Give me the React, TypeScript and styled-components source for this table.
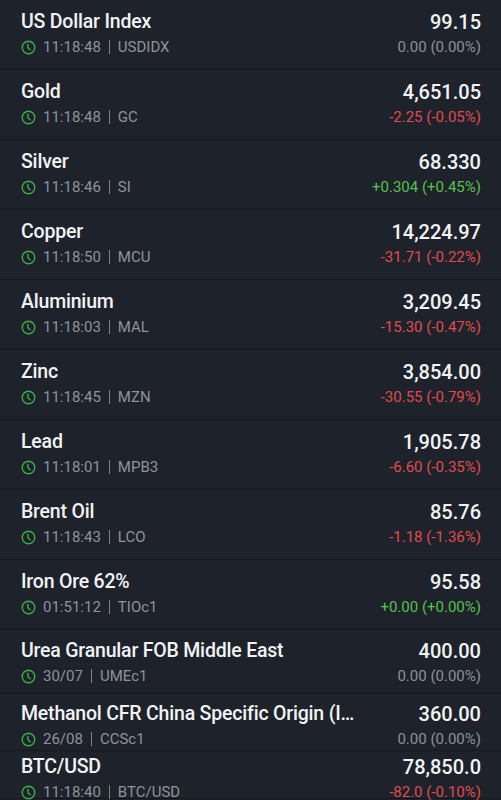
import React from "react";
import styled, { createGlobalStyle } from "styled-components";

type Quote = {
	name: string;
	time: string;
	code: string;
	price: string;
	change: string;
	dir: "up" | "down" | "flat";
	height?: number;
	top?: number;
};

const quotes: Quote[] = [
	{ name: "US Dollar Index", time: "11:18:48", code: "USDIDX", price: "99.15", change: "0.00 (0.00%)", dir: "flat" },
	{ name: "Gold", time: "11:18:48", code: "GC", price: "4,651.05", change: "-2.25 (-0.05%)", dir: "down" },
	{ name: "Silver", time: "11:18:46", code: "SI", price: "68.330", change: "+0.304 (+0.45%)", dir: "up" },
	{ name: "Copper", time: "11:18:50", code: "MCU", price: "14,224.97", change: "-31.71 (-0.22%)", dir: "down" },
	{ name: "Aluminium", time: "11:18:03", code: "MAL", price: "3,209.45", change: "-15.30 (-0.47%)", dir: "down" },
	{ name: "Zinc", time: "11:18:45", code: "MZN", price: "3,854.00", change: "-30.55 (-0.79%)", dir: "down" },
	{ name: "Lead", time: "11:18:01", code: "MPB3", price: "1,905.78", change: "-6.60 (-0.35%)", dir: "down" },
	{ name: "Brent Oil", time: "11:18:43", code: "LCO", price: "85.76", change: "-1.18 (-1.36%)", dir: "down" },
	{ name: "Iron Ore 62%", time: "01:51:12", code: "TIOc1", price: "95.58", change: "+0.00 (+0.00%)", dir: "up" },
	{ name: "Urea Granular FOB Middle East", time: "30/07", code: "UMEc1", price: "400.00", change: "0.00 (0.00%)", dir: "flat", height: 64, top: 9 },
	{ name: "Methanol CFR China Specific Origin (ICIS)", time: "26/08", code: "CCSc1", price: "360.00", change: "0.00 (0.00%)", dir: "flat", height: 57, top: 8 },
	{ name: "BTC/USD", time: "11:18:40", code: "BTC/USD", price: "78,850.0", change: "-82.0 (-0.10%)", dir: "down", height: 48, top: 4 },
];

const changeColors = {
	up: "#55c24d",
	down: "#e04b4f",
	flat: "#8d9198",
};

const Clock = () => (
	<svg width="15" height="15" viewBox="0 0 24 24" fill="none" stroke="#3fae4a" strokeWidth="2.2" strokeLinecap="round" strokeLinejoin="round">
		<circle cx="12" cy="12" r="10" />
		<path d="M11 6.5v5.5l3.5 3.5" />
	</svg>
);

const App = (): JSX.Element => {
	return (
		<>
			<GlobalStyle />
			<List>
				{quotes.map((q) => (
					<Row key={q.code} $height={q.height ?? 70} $top={q.top ?? 10}>
						<Left>
							<Name>{q.name}</Name>
							<Meta>
								<Clock />
								<span>{q.time}</span>
								<Bar />
								<span>{q.code}</span>
							</Meta>
						</Left>
						<Right>
							<Price>{q.price}</Price>
							<Change $color={changeColors[q.dir]}>{q.change}</Change>
						</Right>
					</Row>
				))}
			</List>
		</>
	);
};

const GlobalStyle = createGlobalStyle`
	html, body {
		margin: 0;
		padding: 0;
		background: #1e222a;
		font-family: Roboto, "Liberation Sans", sans-serif;
	}
`;

const List = styled.div`
	display: flex;
	flex-direction: column;
	width: 501px;
	height: 800px;
	overflow: hidden;
	background: #1e222a;
`;

const Row = styled.div<{ $height: number; $top: number }>`
	display: flex;
	align-items: flex-start;
	justify-content: space-between;
	gap: 12px;
	flex-shrink: 0;
	box-sizing: border-box;
	height: ${(p) => p.$height}px;
	padding: ${(p) => p.$top}px 20px 0 21px;
	border-bottom: 1px solid #14171c;
`;

const Left = styled.div`
	display: flex;
	flex-direction: column;
	flex: 1;
	min-width: 0;
`;

const Name = styled.div`
	font-size: 19.5px;
	font-weight: 500;
	letter-spacing: -0.2px;
	line-height: 24px;
	color: #f2f3f4;
	white-space: nowrap;
	overflow: hidden;
	text-overflow: ellipsis;
`;

const Meta = styled.div`
	display: flex;
	align-items: center;
	gap: 8px;
	margin-top: 3px;
	font-size: 15px;
	line-height: 20px;
	color: #8f939a;
	white-space: nowrap;

	svg {
		margin-right: -1px;
	}
`;

const Bar = styled.span`
	width: 1px;
	height: 14px;
	background: #7d8188;
`;

const Right = styled.div`
	display: flex;
	flex-direction: column;
	align-items: flex-end;
	flex-shrink: 0;
	min-width: 110px;
`;

const Price = styled.div`
	font-size: 20px;
	font-weight: 500;
	line-height: 24px;
	color: #f2f3f4;
`;

const Change = styled.div<{ $color: string }>`
	margin-top: 3px;
	font-size: 15px;
	line-height: 20px;
	color: ${(p) => p.$color};
`;

export default App;
